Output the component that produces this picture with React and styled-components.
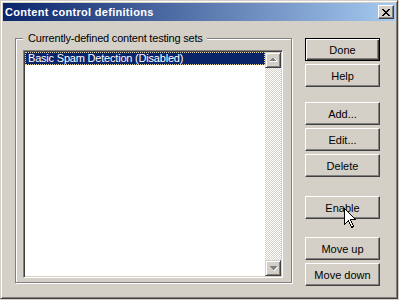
import React from "react";
import styled, { createGlobalStyle, css } from "styled-components";

const Global = createGlobalStyle`
  html, body { margin: 0; padding: 0; background: #d4d0c8; }
  body { font-family: "Liberation Sans", Arial, sans-serif; font-size: 11px; }
`;

const Window = styled.div`
  box-sizing: border-box;
  width: 398px;
  height: 299px;
  background: #d4d0c8;
  border: 1px solid;
  border-color: #d4d0c8 #404040 #404040 #d4d0c8;
  box-shadow: inset 1px 1px #ffffff, inset -1px -1px #808080;
  padding: 2px;
  display: flex;
  flex-direction: column;
`;

const TitleBar = styled.div`
  height: 18px;
  display: flex;
  align-items: center;
  justify-content: space-between;
  padding: 0 1px 0 2px;
  background: linear-gradient(to right, #0a246a, #a6caf0);
  color: #fff;
  font-weight: bold;
  font-size: 11px;
  letter-spacing: 0.3px;
`;

const TitleText = styled.span`
  line-height: 18px;
  white-space: nowrap;
`;

const CloseBtn = styled.div`
  box-sizing: border-box;
  width: 16px;
  height: 14px;
  background: #d4d0c8;
  border: 1px solid;
  border-color: #ffffff #404040 #404040 #ffffff;
  box-shadow: inset -1px -1px #808080;
  display: flex;
  align-items: center;
  justify-content: center;
`;

const Body = styled.div`
  flex: 1;
  display: flex;
  padding: 17px 0 0 12px;
  gap: 13px;
`;

const GroupBox = styled.div`
  position: relative;
  box-sizing: border-box;
  width: 277px;
  height: 245px;
  border: 1px solid #808080;
  box-shadow: inset 1px 1px #ffffff, 1px 1px #ffffff;
  padding: 11px 0 0 7px;
`;

const GroupLabel = styled.span`
  position: absolute;
  left: 7px;
  top: -8px;
  padding: 0 4px 0 5px;
  background: #d4d0c8;
  color: #000;
  line-height: 14px;
  letter-spacing: -0.2px;
  white-space: nowrap;
`;

const ListBox = styled.div`
  box-sizing: border-box;
  width: 260px;
  height: 228px;
  border: 1px solid;
  border-color: #808080 #ffffff #ffffff #808080;
  box-shadow: inset 1px 1px #404040, inset -1px -1px #d4d0c8;
  padding: 1px;
  display: flex;
  background: #fff;
`;

const Items = styled.div`
  flex: 1;
  background: #fff;
`;

const Item = styled.div`
  box-sizing: border-box;
  height: 13px;
  line-height: 11px;
  padding-left: 2px;
  letter-spacing: -0.2px;
  white-space: nowrap;
  ${(p) =>
    p.$selected &&
    css`
      background: #0a246a;
      color: #fff;
      border: 1px dotted #e8d9a0;
    `}
`;

const ScrollBar = styled.div`
  width: 16px;
  display: flex;
  flex-direction: column;
  justify-content: space-between;
  background-color: #fff;
  background-image: repeating-conic-gradient(#ffffff 0 25%, #d4d0c8 0 50%);
  background-size: 2px 2px;
`;

const ArrowBtn = styled.div`
  box-sizing: border-box;
  width: 16px;
  height: 16px;
  background: #d4d0c8;
  border: 1px solid;
  border-color: #d4d0c8 #404040 #404040 #d4d0c8;
  box-shadow: inset 1px 1px #ffffff, inset -1px -1px #808080;
  display: flex;
  align-items: center;
  justify-content: center;
`;

const ButtonCol = styled.div`
  display: flex;
  flex-direction: column;
  width: 75px;
`;

const Button = styled.div`
  position: relative;
  box-sizing: border-box;
  width: 75px;
  height: 23px;
  margin-top: ${(p) => p.$gap || 0}px;
  background: #d4d0c8;
  color: #000;
  display: flex;
  align-items: center;
  justify-content: center;
  border: 1px solid;
  border-color: #ffffff #404040 #404040 #ffffff;
  box-shadow: inset -1px -1px #808080;
  ${(p) =>
    p.$default &&
    css`
      border: 1px solid #000;
      box-shadow: inset 1px 1px #ffffff, inset -1px -1px #404040,
        inset -2px -2px #808080;
    `}
`;

const Cursor = styled.svg`
  position: absolute;
  left: 38px;
  top: 11px;
`;

const UpArrow = () => (
  <svg width="9" height="6" viewBox="0 0 9 6">
    <path d="M4 0.5 L7.5 4 L0.5 4 Z" fill="#808080" shapeRendering="crispEdges" />
    <path d="M1 4 h7 v1 h-7 Z M5 1 h1 v1 h1 v1 h1 v1 h-1 v-1 h-1 v-1 h-1 Z" fill="#ffffff" shapeRendering="crispEdges" />
  </svg>
);

const DownArrow = () => (
  <svg width="9" height="6" viewBox="0 0 9 6">
    <path d="M1 1 h7 v1 h-1 v1 h-1 v1 h-1 v1 h-1 v-1 h-1 v-1 h-1 v-1 h-1 Z" fill="#808080" shapeRendering="crispEdges" />
    <path d="M8 2 h1 v1 h-1 v1 h-1 v1 h-1 v1 h-1 v-1 h1 v-1 h1 v-1 h1 Z" fill="#ffffff" shapeRendering="crispEdges" />
  </svg>
);

export default function App() {
  return (
    <>
      <Global />
      <Window>
        <TitleBar>
          <TitleText>Content control definitions</TitleText>
          <CloseBtn>
            <svg width="8" height="7" viewBox="0 0 8 7">
              <path
                d="M0 0 h2 v1 h1 v1 h2 v-1 h1 v-1 h2 v1 h-1 v1 h-1 v1 h-1 v1 h1 v1 h1 v1 h1 v1 h-2 v-1 h-1 v-1 h-2 v1 h-1 v1 h-2 v-1 h1 v-1 h1 v-1 h1 v-1 h-1 v-1 h-1 v-1 h-1 Z"
                fill="#000"
                shapeRendering="crispEdges"
              />
            </svg>
          </CloseBtn>
        </TitleBar>
        <Body>
          <GroupBox>
            <GroupLabel>Currently-defined content testing sets</GroupLabel>
            <ListBox>
              <Items>
                <Item $selected>Basic Spam Detection (Disabled)</Item>
              </Items>
              <ScrollBar>
                <ArrowBtn>
                  <UpArrow />
                </ArrowBtn>
                <ArrowBtn>
                  <DownArrow />
                </ArrowBtn>
              </ScrollBar>
            </ListBox>
          </GroupBox>
          <ButtonCol>
            <Button $default>Done</Button>
            <Button $gap={3}>Help</Button>
            <Button $gap={15}>Add...</Button>
            <Button $gap={3}>Edit...</Button>
            <Button $gap={3}>Delete</Button>
            <Button $gap={19}>
              Enable
              <Cursor width="13" height="21" viewBox="0 0 13 21">
                <path
                  d="M0.5 0.5 L0.5 16.5 L4.5 12.5 L7.5 19.5 L9.5 18.5 L6.5 11.5 L11.5 11.5 Z"
                  fill="#fff"
                  stroke="#000"
                  strokeWidth="1"
                  shapeRendering="crispEdges"
                />
              </Cursor>
            </Button>
            <Button $gap={18}>Move up</Button>
            <Button $gap={3}>Move down</Button>
          </ButtonCol>
        </Body>
      </Window>
    </>
  );
}
